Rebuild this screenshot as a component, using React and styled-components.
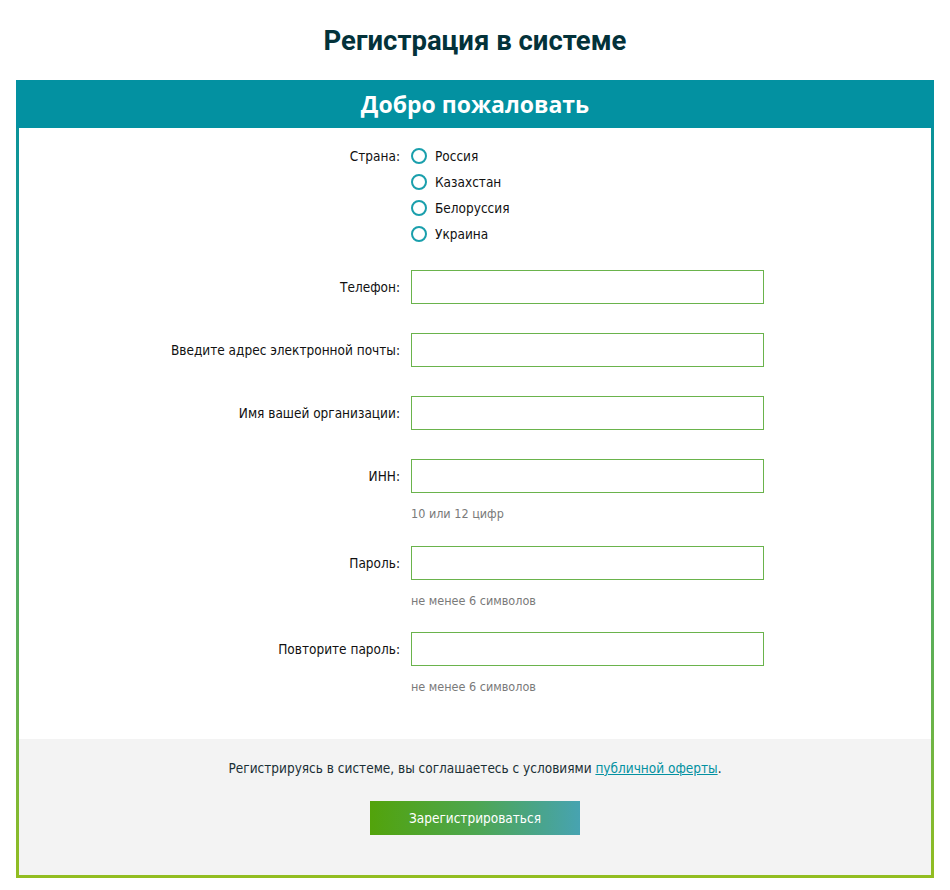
import React from "react";
import styled, { createGlobalStyle } from "styled-components";

const GlobalStyle = createGlobalStyle`
  body {
    margin: 0;
    background: #fff;
    font-family: "DejaVu Sans Condensed", "DejaVu Sans", sans-serif;
  }
`;

const Page = styled.div`
  padding: 0 16px;
`;

const Title = styled.h1`
  margin: 0;
  height: 80px;
  line-height: 82px;
  text-align: center;
  font-family: Roboto, "Noto Sans", sans-serif;
  font-weight: 700;
  font-size: 27.5px;
  color: #03323a;
`;

const Card = styled.div`
  background: linear-gradient(180deg, #03919f 0%, #3aa37a 45%, #6ab34a 80%, #92bd20 100%);
  padding: 0 3px 3px;
`;

const Header = styled.div`
  margin: 0 -3px;
  height: 48px;
  line-height: 48px;
  background: #0391a1;
  color: #fff;
  text-align: center;
  font-family: "Open Sans", "Noto Sans", sans-serif;
  font-weight: 700;
  font-size: 23px;
`;

const Body = styled.div`
  background: #fff;
  padding: 15px 0 20px;
`;

const Field = styled.div`
  display: grid;
  grid-template-columns: 381px 353px 1fr;
  column-gap: 11px;
  margin-bottom: ${(p) => p.$gap};
`;

const Label = styled.label`
  text-align: right;
  font-size: 13.5px;
  color: #111;
  line-height: ${(p) => (p.$top ? "26px" : "34px")};
`;

const Input = styled.input`
  box-sizing: border-box;
  width: 353px;
  height: 34px;
  border: 1px solid #6ab34c;
  outline: none;
  padding: 0 8px;
  font: inherit;
`;

const Hint = styled.div`
  grid-column: 2;
  padding-top: 13px;
  margin-bottom: 23.5px;
  line-height: 16px;
  font-size: 12.5px;
  color: #7a7a7a;
`;

const Radios = styled.div`
  display: flex;
  flex-direction: column;
`;

const RadioRow = styled.label`
  display: flex;
  align-items: center;
  gap: 8px;
  height: 26px;
  font-size: 13.5px;
  color: #111;
`;

const Circle = styled.span`
  box-sizing: border-box;
  width: 16px;
  height: 16px;
  border: 2px solid #1a9fac;
  border-radius: 50%;
`;

const Footer = styled.div`
  background: #f3f3f3;
  padding: 20px 0 40px;
  text-align: center;
`;

const Note = styled.p`
  margin: 0 0 24px;
  line-height: 18px;
  font-size: 13.5px;
  color: #1a2f35;

  a {
    color: #0391a1;
    text-decoration: underline;
  }
`;

const Button = styled.button`
  width: 210px;
  height: 34px;
  border: none;
  background: linear-gradient(90deg, #52a30b 0%, #4da650 50%, #47a3b1 100%);
  color: #fff;
  font-family: "DejaVu Sans Condensed", "DejaVu Sans", sans-serif;
  font-size: 13.5px;
  cursor: pointer;
`;

const countries = ["Россия", "Казахстан", "Белоруссия", "Украина"];

const fields = [
  { label: "Телефон:" },
  { label: "Введите адрес электронной почты:" },
  { label: "Имя вашей организации:" },
  { label: "ИНН:", hint: "10 или 12 цифр" },
  { label: "Пароль:", hint: "не менее 6 символов", type: "password" },
  { label: "Повторите пароль:", hint: "не менее 6 символов", type: "password" },
];

export default function App() {
  return (
    <Page>
      <GlobalStyle />
      <Title>Регистрация в системе</Title>
      <Card>
        <Header>Добро пожаловать</Header>
        <Body>
          <Field $gap="23px">
            <Label $top>Страна:</Label>
            <Radios>
              {countries.map((c) => (
                <RadioRow key={c}>
                  <Circle />
                  {c}
                </RadioRow>
              ))}
            </Radios>
          </Field>
          {fields.map((f) => (
            <Field key={f.label} $gap={f.hint ? "0" : "29px"}>
              <Label>{f.label}</Label>
              <Input type={f.type || "text"} />
              {f.hint && <Hint>{f.hint}</Hint>}
            </Field>
          ))}
        </Body>
        <Footer>
          <Note>
            Регистрируясь в системе, вы соглашаетесь с условиями{" "}
            <a href="#">публичной оферты</a>.
          </Note>
          <Button>Зарегистрироваться</Button>
        </Footer>
      </Card>
    </Page>
  );
}
